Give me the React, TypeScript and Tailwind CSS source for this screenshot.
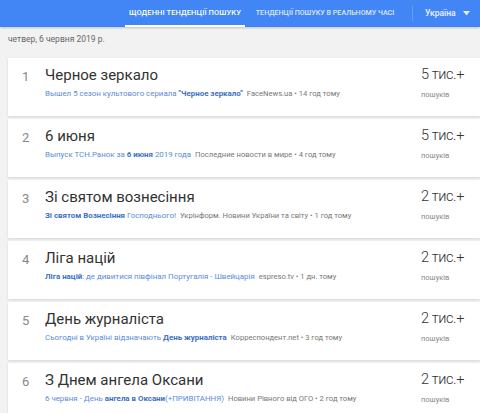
import React from "react";

type Part = { t: string; b?: boolean };
type Item = { n: number; title: string; parts: Part[]; src: string; count: string };

const items: Item[] = [
  { n: 1, title: "Черное зеркало", parts: [{ t: "Вышел 5 сезон культового сериала " }, { t: "\"Черное зеркало\"", b: true }], src: "FaceNews.ua • 14 год тому", count: "5 тис.+" },
  { n: 2, title: "6 июня", parts: [{ t: "Выпуск ТСН.Ранок за " }, { t: "6 июня", b: true }, { t: " 2019 года" }], src: "Последние новости в мире • 4 год тому", count: "5 тис.+" },
  { n: 3, title: "Зі святом вознесіння", parts: [{ t: "Зі святом Вознесіння", b: true }, { t: " Господнього!" }], src: "Укрінформ. Новини України та світу • 1 год тому", count: "2 тис.+" },
  { n: 4, title: "Ліга націй", parts: [{ t: "Ліга націй", b: true }, { t: ": де дивитися півфінал Португалія - Швейцарія" }], src: "espreso.tv • 1 дн. тому", count: "2 тис.+" },
  { n: 5, title: "День журналіста", parts: [{ t: "Сьогодні в Україні відзначають " }, { t: "День журналіста", b: true }], src: "Корреспондент.net • 3 год тому", count: "2 тис.+" },
  { n: 6, title: "З Днем ангела Оксани", parts: [{ t: "6 червня - День " }, { t: "ангела в Оксани", b: true }, { t: "(+ПРИВІТАННЯ)" }], src: "Новини Рівного від ОГО • 2 год тому", count: "2 тис.+" },
];

export default function App() {
  return (
    <div className="w-[480px] h-[413px] overflow-hidden bg-[#f2f2f2]" style={{ fontFamily: "Roboto, 'Noto Sans', sans-serif" }}>
      <div className="h-[27px] bg-[#4285f4] flex items-stretch shadow-[0_1px_2px_rgba(0,0,0,0.2)]">
        <div className="w-[125px]" />
        <div className="w-[120px] flex items-center justify-center border-b-2 border-white text-[7.5px] font-medium text-white tracking-[0.1px]">
          ЩОДЕННІ ТЕНДЕНЦІЇ ПОШУКУ
        </div>
        <div className="w-[160px] flex items-center justify-center text-[7.1px] font-medium text-white/80">
          ТЕНДЕНЦІЇ ПОШУКУ В РЕАЛЬНОМУ ЧАСІ
        </div>
        <div className="my-[6px] ml-[7px] w-px bg-white/20" />
        <div className="flex items-center pl-[12px] gap-[7px] text-[8.5px] font-medium text-white/90">
          <span>Україна</span>
          <svg width="7" height="5" viewBox="0 0 7 5"><path d="M0 0h7L3.5 4.5z" fill="rgba(255,255,255,0.85)" /></svg>
        </div>
      </div>
      <div className="pl-[8px] pt-[6px] text-[8.5px] text-[#666] h-[31px]">четвер, 6 червня 2019 р.</div>
      <div className="pl-[8px] flex flex-col gap-[3px]">
        {items.map((it) => (
          <div key={it.n} className="bg-white h-[58px] flex items-start shadow-[0_1px_2px_rgba(0,0,0,0.12)]">
            <div className="w-[37px] pt-[9px] pl-[14px] text-[13px] text-[#888]">{it.n}</div>
            <div className="flex-1 pt-[7px]">
              <div className="text-[15px] text-[#333] leading-[20px]">{it.title}</div>
              <div className="mt-[3px] text-[7.9px] leading-[12px] whitespace-nowrap">
                {it.parts.map((p, i) => (
                  <span key={i} className={p.b ? "font-bold text-[#3b6fc4]" : "text-[#5b8bd8]"}>{p.t}</span>
                ))}
                <span className="text-[#777] ml-[4px] text-[7.6px]">{it.src}</span>
              </div>
            </div>
            <div className="w-[59px] pt-[8px]">
              <div className="text-[14.5px] font-light text-[#333] leading-[18px] tracking-[-0.4px]">{it.count}</div>
              <div className="mt-[5px] text-[7.5px] text-[#888]">пошуків</div>
            </div>
          </div>
        ))}
      </div>
    </div>
  );
}
